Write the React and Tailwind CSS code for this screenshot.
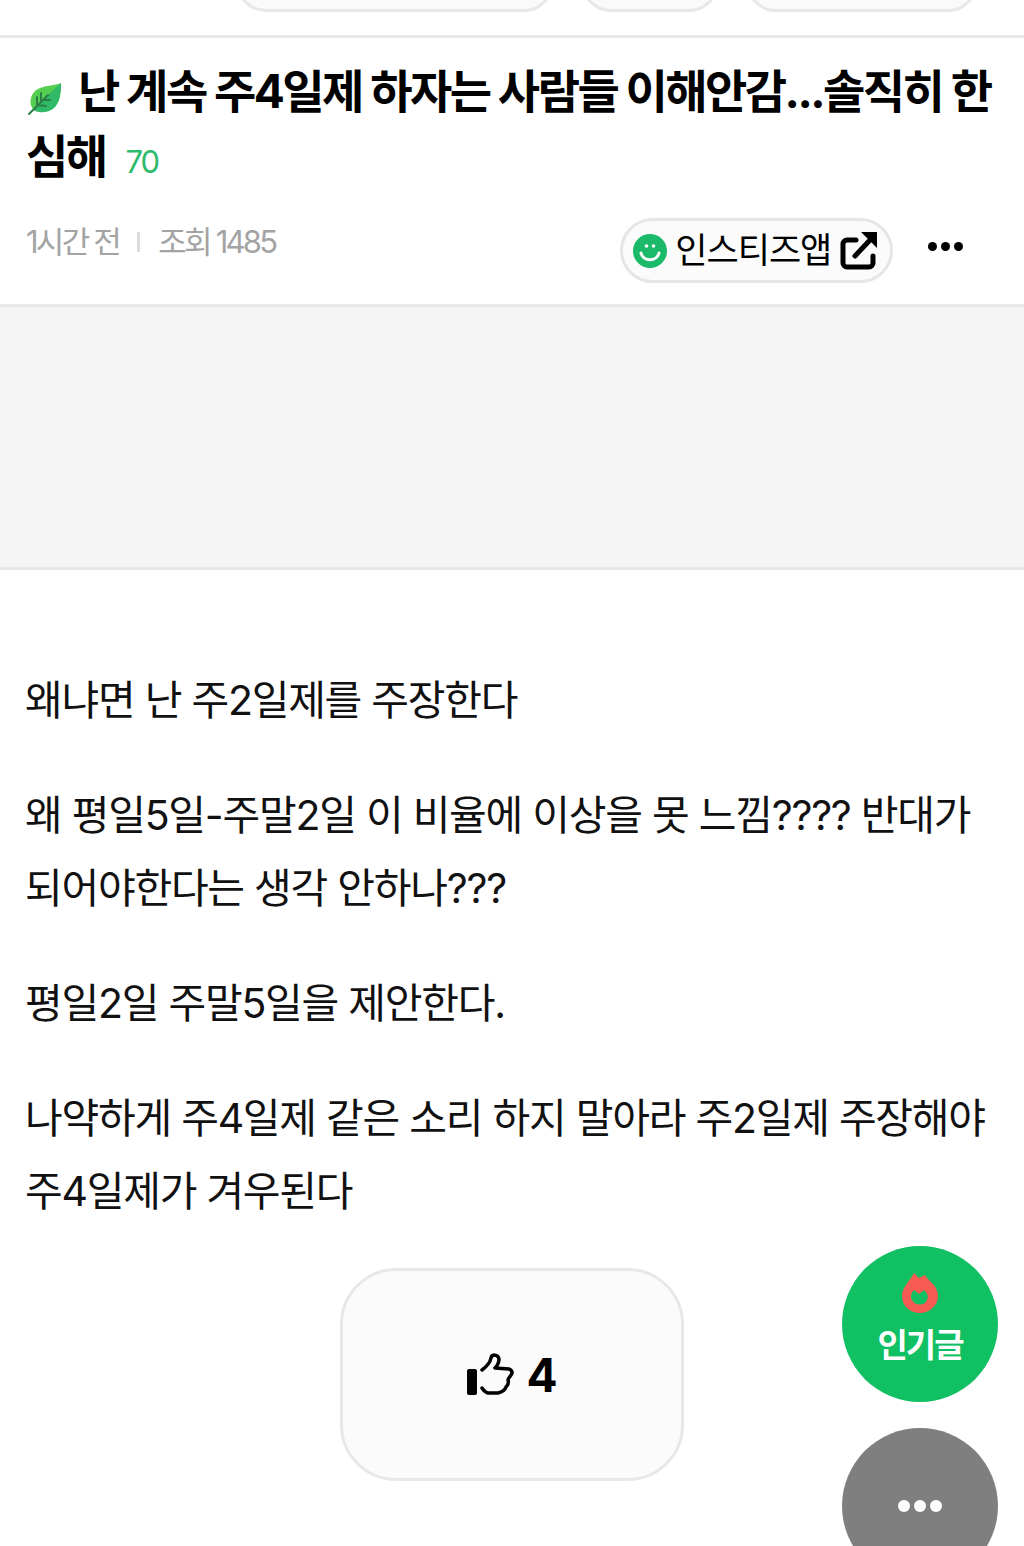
import React from "react";

const Leaf = () => (
  <svg width="36" height="34" viewBox="0 0 36 34" className="block">
    <path d="M35 1C28 4 16 3 9 9C4 14 3 22 7 27C12 32 23 31 29 25C34 19 35 10 35 1Z" fill="#55cf4f" />
    <path d="M35 1C35 10 34 19 29 25C23 31 12 32 7 27Z" fill="#2fb968" />
    <path d="M3 32L22 13M11 23L11 15M15 19L15 11M12 23L20 24M16 18L24 18" stroke="#2c7d46" strokeWidth="2" fill="none" strokeLinecap="round" />
  </svg>
);

const Smile = () => (
  <svg width="34" height="34" viewBox="0 0 34 34" className="shrink-0">
    <circle cx="17" cy="17" r="17" fill="#1bb96a" />
    <circle cx="13.5" cy="12" r="1.8" fill="#fff" />
    <circle cx="20.5" cy="12" r="1.8" fill="#fff" />
    <path d="M8 19C10 28 24 28 26 19" stroke="#fff" strokeWidth="3" fill="none" strokeLinecap="round" />
  </svg>
);

const LinkOut = () => (
  <svg width="38" height="38" viewBox="0 0 38 38" className="ml-[9px] shrink-0">
    <path d="M16 8H7a4 4 0 0 0-4 4V31a4 4 0 0 0 4 4H29a4 4 0 0 0 4-4V24" stroke="#000" strokeWidth="5" fill="none" strokeLinecap="round" />
    <path d="M15 24L30 8" stroke="#000" strokeWidth="5" fill="none" strokeLinecap="round" />
    <path d="M21 0H37V16Z" fill="#000" />
  </svg>
);

const Thumb = () => (
  <svg width="48" height="44" viewBox="0 0 48 44">
    <rect x="1" y="16" width="10" height="26" rx="2" fill="#000" />
    <path d="M16 17C20 14 24 10 25 5C26 1 32 1 33 6C33 10 31 13 29 15L43 16C46 17 47 20 45 22C44 24 42 25 42 27C43 30 42 32 40 34C39 37 36 39 32 40H23C20 40 18 38 16 35" stroke="#000" strokeWidth="3.5" fill="none" strokeLinejoin="round" strokeLinecap="round" />
  </svg>
);

const Flame = () => (
  <svg width="36" height="40" viewBox="0 0 36 40">
    <path fillRule="evenodd" d="M12 0L17 5L23 2C26 8 36 12 36 23C36 33 27 40 18 40C8 40 0 33 0 23C0 14 8 8 12 0ZM12 17C9 20 8 24 10 27C13 33 23 33 25 27C27 23 25 20 22 17L17 21Z" fill="#f85a54" />
  </svg>
);

const App = () => {
  return (
    <div className="relative h-[1546px] w-[1024px] overflow-hidden bg-white font-['Inter','Noto_Sans_CJK_KR',sans-serif] text-black">
      {/* chips cut off by the top edge */}
      <div className="flex h-[38px] items-start overflow-hidden border-b-[3px] border-[#e8e8e8] pl-[236px]">
        <div className="-mt-[48px] flex gap-[27px]">
          <div className="h-[60px] w-[318px] rounded-[30px] border-[3px] border-[#e8e8e8] bg-[#fafafa]" />
          <div className="h-[60px] w-[138px] rounded-[30px] border-[3px] border-[#e8e8e8] bg-[#fafafa]" />
          <div className="h-[60px] w-[232px] rounded-[30px] border-[3px] border-[#e8e8e8] bg-[#fafafa]" />
        </div>
      </div>

      <div className="px-[26px] pt-[21px]">
        <h1 className="text-[46px] leading-[65px] font-bold tracking-[-2.55px]">
          <span className="mr-[16px] inline-block h-[34px] align-[-8px] leading-none">
            <Leaf />
          </span>
          난 계속 주4일제 하자는 사람들 이해안감...솔직히 한 심해
          <span className="ml-[20px] text-[31px] leading-none font-normal tracking-[-2px] text-[#2dbb6b]">70</span>
        </h1>
      </div>

      <div className="flex h-[118px] items-start border-b-[3px] border-[#e8e8e8] pl-[26px]">
        <div className="mt-[32px] flex items-center text-[31px] leading-[42px] tracking-[-2.75px] text-[#a3a3a3]">
          <span>1시간 전</span>
          <span className="mx-[18px] h-[20px] w-[3px] bg-[#dcdcdc]" />
          <span>조회 1485</span>
        </div>
        <div className="mt-[29px] ml-[345px] flex h-[65px] w-[273px] items-center rounded-[33px] border-[3px] border-[#e6e6e6] bg-[#fbfbfb] pl-[10px]">
          <Smile />
          <span className="ml-[8px] text-[35px] leading-none tracking-[-1px] whitespace-nowrap">인스티즈앱</span>
          <LinkOut />
        </div>
        <div className="mt-[53px] ml-[35px] flex gap-[4px]">
          <span className="size-[9px] rounded-full bg-black" />
          <span className="size-[9px] rounded-full bg-black" />
          <span className="size-[9px] rounded-full bg-black" />
        </div>
      </div>

      <div className="h-[263px] border-b-[3px] border-[#e8e8e8] bg-[#f5f5f5]" />

      <div className="px-[25px] pt-[94px] text-[41px] leading-[73px] tracking-[-1.25px] text-[#111]">
        <p className="mb-[42px]">왜냐면 난 주2일제를 주장한다</p>
        <p className="mb-[42px]">왜 평일5일-주말2일 이 비율에 이상을 못 느낌???? 반대가 되어야한다는 생각 안하나???</p>
        <p className="mb-[42px]">평일2일 주말5일을 제안한다.</p>
        <p>나약하게 주4일제 같은 소리 하지 말아라 주2일제 주장해야 주4일제가 겨우된다</p>
      </div>

      <div className="mt-[40px] ml-[340px] flex h-[213px] w-[344px] items-center justify-center gap-[12px] rounded-[56px] border-[3px] border-[#e8e8e8] bg-[#fbfbfb]">
        <Thumb />
        <span className="text-[46px] leading-none font-bold">4</span>
      </div>

      {/* floating buttons */}
      <div className="absolute top-[1246px] left-[842px] flex size-[156px] flex-col items-center rounded-full bg-[#12c064] pt-[27px]">
        <Flame />
        <span className="mt-[12px] text-[33px] leading-[40px] font-bold tracking-[-2px] text-white">인기글</span>
      </div>
      <div className="absolute top-[1428px] left-[842px] flex size-[156px] items-center justify-center gap-[4px] rounded-full bg-[#7f7f7f]">
        <span className="size-[12px] rounded-full bg-white" />
        <span className="size-[12px] rounded-full bg-white" />
        <span className="size-[12px] rounded-full bg-white" />
      </div>
    </div>
  );
};

export default App;
